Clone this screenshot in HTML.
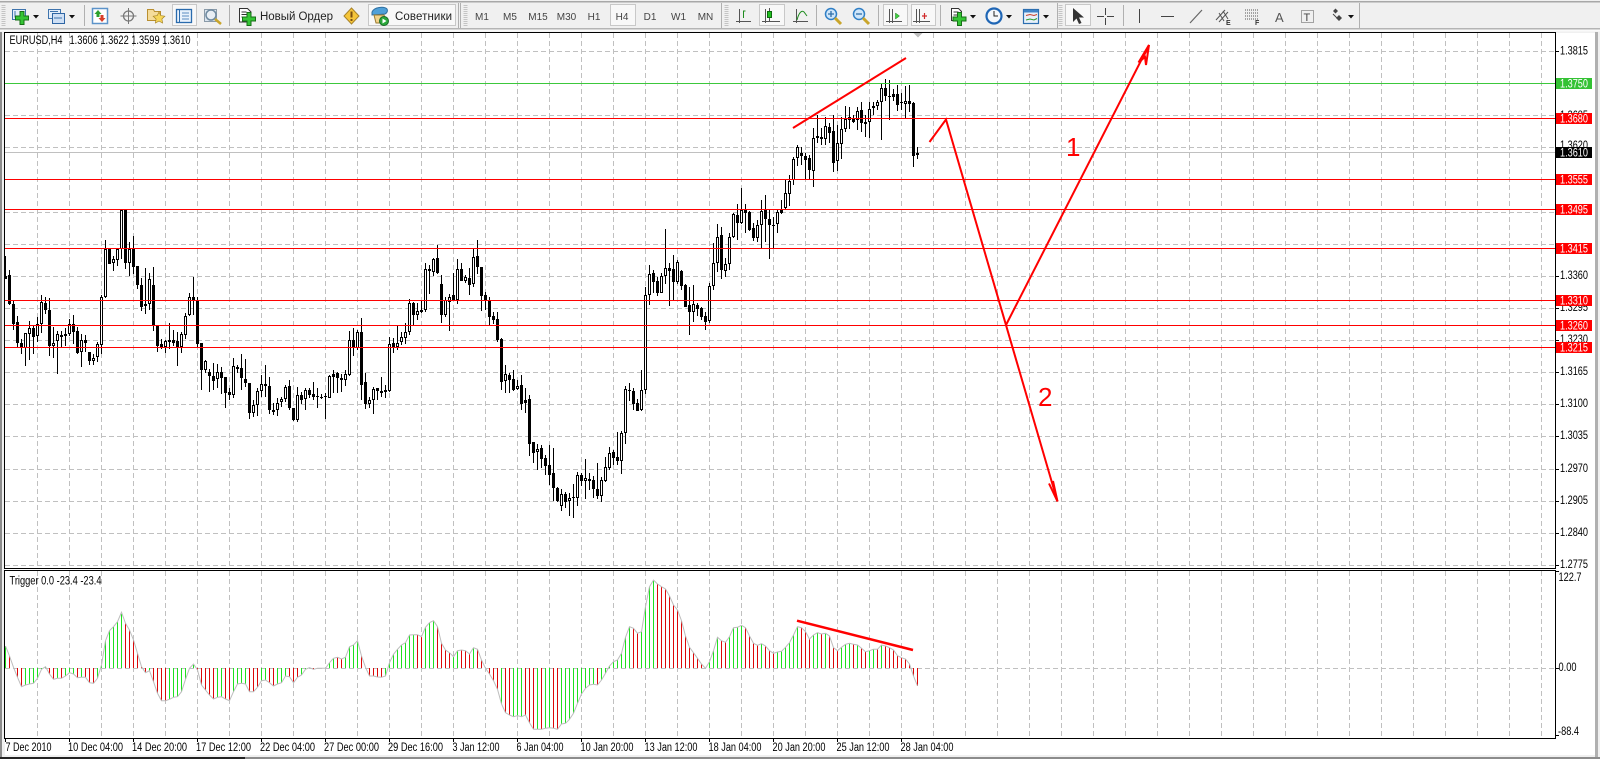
<!DOCTYPE html>
<html><head><meta charset="utf-8"><title>EURUSD,H4</title>
<style>
html,body{margin:0;padding:0;background:#f0f0f0;width:1600px;height:759px;overflow:hidden}
svg{display:block;position:absolute;left:0;top:0}
text{font-family:"Liberation Sans",sans-serif;font-size:11.5px;fill:#000}
.p{font-size:10px;fill:#444;text-anchor:middle}
.w{fill:#fff}
.t{font-size:11.5px;fill:#222}
</style></head><body>
<svg id="s" width="1600" height="759" viewBox="0 0 1600 759" xmlns="http://www.w3.org/2000/svg">
<defs>
<g id="plus"><path d="M-2-6.500h4v4.500h4.500v4h-4.500v4.500h-4v-4.500h-4.500v-4h4.500z" fill="#35c535" stroke="#167016"/></g>
<g id="mag"><circle cx="0" cy="0" r="5.500" fill="#cfe6fa" stroke="#2f7fc6" stroke-width="1.500"/><path d="M4 4l6 6" stroke="#c9a52b" stroke-width="3"/></g>
</defs>
<!-- window chrome -->
<rect x="0" y="0" width="1600" height="759" fill="#f0f0f0"/>
<rect x="0" y="1" width="1600" height="1.500" fill="#a8a8a8"/>
<rect x="0" y="28" width="1600" height="1.500" fill="#b4b4b4"/>
<rect x="0" y="29.500" width="1600" height="2" fill="#fafafa"/>
<rect x="0" y="32" width="2" height="725" fill="#8c8c8c"/>
<rect x="5" y="33" width="1590" height="722" fill="#fff"/>
<rect x="1595" y="32" width="3" height="725" fill="#b0b0b0"/>
<rect x="0" y="757" width="245" height="2" fill="#222"/>
<rect x="245" y="757" width="1355" height="2" fill="#8c8c8c"/>
<g id="grid"></g>
<rect x="5" y="152" width="1550" height="1" fill="#c0c0c0"/>
<g id="cnd" shape-rendering="crispEdges"></g>
<g shape-rendering="crispEdges" fill="#f00">
<rect x="5" y="83" width="1550" height="1" fill="#3cc83c"/>
<rect x="5" y="118" width="1550" height="1"/>
<rect x="5" y="179" width="1550" height="1"/>
<rect x="5" y="209" width="1550" height="1"/>
<rect x="5" y="248" width="1550" height="1"/>
<rect x="5" y="300" width="1550" height="1"/>
<rect x="5" y="325" width="1550" height="1"/>
<rect x="5" y="347" width="1550" height="1"/>
</g>
<g id="ind"></g>
<!-- frames -->
<g shape-rendering="crispEdges" fill="#000">
<rect x="4" y="32" width="1551" height="1"/>
<rect x="4" y="32" width="1" height="537"/>
<rect x="4" y="568" width="1551" height="1"/>
<rect x="1555" y="32" width="1" height="537"/>
<rect x="4" y="570" width="1551" height="1"/>
<rect x="4" y="570" width="1" height="169"/>
<rect x="4" y="738" width="1551" height="1"/>
<rect x="1555" y="570" width="1" height="169"/>
<rect x="1556" y="51" width="3" height="1"/><rect x="1556" y="276" width="3" height="1"/><rect x="1556" y="308" width="3" height="1"/><rect x="1556" y="340" width="3" height="1"/><rect x="1556" y="372" width="3" height="1"/><rect x="1556" y="404" width="3" height="1"/><rect x="1556" y="436" width="3" height="1"/><rect x="1556" y="469" width="3" height="1"/><rect x="1556" y="501" width="3" height="1"/><rect x="1556" y="533" width="3" height="1"/><rect x="1556" y="565" width="3" height="1"/>
<rect x="1556" y="668" width="3" height="1"/><rect x="1556" y="571" width="3" height="1"/><rect x="1556" y="735" width="3" height="1"/>
<rect x="5" y="739" width="1" height="3"/><rect x="69" y="739" width="1" height="3"/><rect x="133" y="739" width="1" height="3"/><rect x="197" y="739" width="1" height="3"/><rect x="261" y="739" width="1" height="3"/><rect x="325" y="739" width="1" height="3"/><rect x="389" y="739" width="1" height="3"/><rect x="453" y="739" width="1" height="3"/><rect x="517" y="739" width="1" height="3"/><rect x="581" y="739" width="1" height="3"/><rect x="645" y="739" width="1" height="3"/><rect x="709" y="739" width="1" height="3"/><rect x="773" y="739" width="1" height="3"/><rect x="837" y="739" width="1" height="3"/><rect x="901" y="739" width="1" height="3"/>
</g>
<path d="M913.500 33h9l-4.500 4.500z" fill="#bdbdbd"/>
<!-- annotations -->
<g fill="none" stroke="#f00" stroke-width="2">
<path d="M793 128L906 58"/>
<path d="M929.500 142L946 119.500L1057.500 501.500"/>
<path d="M1049 483.500L1057.500 501.500L1053 481"/>
<path d="M1006 325L1149 45"/>
<path d="M1138.500 62.500L1149 45L1146 65L1145 57L1138.500 62.500"/>
<path d="M1142 59L1148 49" stroke-width="1.500"/>
<path d="M797 620.700L913 650" stroke-width="2.500"/>
</g>
<text x="1066" y="156" style="font-size:26px;fill:#f00">1</text>
<text x="1038" y="406" style="font-size:26px;fill:#f00">2</text>
<!-- price labels -->
<g>
<text x="1560" y="54.500" textLength="28" lengthAdjust="spacingAndGlyphs">1.3815</text>
<text x="1560" y="119" textLength="28" lengthAdjust="spacingAndGlyphs">1.3685</text>
<text x="1560" y="149" textLength="28" lengthAdjust="spacingAndGlyphs">1.3620</text>
<text x="1560" y="279" textLength="28" lengthAdjust="spacingAndGlyphs">1.3360</text>
<text x="1560" y="311" textLength="28" lengthAdjust="spacingAndGlyphs">1.3295</text>
<text x="1560" y="343" textLength="28" lengthAdjust="spacingAndGlyphs">1.3230</text>
<text x="1560" y="375" textLength="28" lengthAdjust="spacingAndGlyphs">1.3165</text>
<text x="1560" y="407" textLength="28" lengthAdjust="spacingAndGlyphs">1.3100</text>
<text x="1560" y="439" textLength="28" lengthAdjust="spacingAndGlyphs">1.3035</text>
<text x="1560" y="472" textLength="28" lengthAdjust="spacingAndGlyphs">1.2970</text>
<text x="1560" y="504" textLength="28" lengthAdjust="spacingAndGlyphs">1.2905</text>
<text x="1560" y="536" textLength="28" lengthAdjust="spacingAndGlyphs">1.2840</text>
<text x="1560" y="568" textLength="28" lengthAdjust="spacingAndGlyphs">1.2775</text>
<g shape-rendering="crispEdges">
<rect x="1556" y="78" width="36" height="11" fill="#34c234"/>
<rect x="1556" y="113" width="36" height="11" fill="#f00"/>
<rect x="1556" y="147" width="36" height="11" fill="#000"/>
<rect x="1556" y="174" width="36" height="11" fill="#f00"/>
<rect x="1556" y="204" width="36" height="11" fill="#f00"/>
<rect x="1556" y="243" width="36" height="11" fill="#f00"/>
<rect x="1556" y="295" width="36" height="11" fill="#f00"/>
<rect x="1556" y="320" width="36" height="11" fill="#f00"/>
<rect x="1556" y="342" width="36" height="11" fill="#f00"/>
</g>
<text class="w" x="1560" y="87.500" textLength="28" lengthAdjust="spacingAndGlyphs">1.3750</text>
<text class="w" x="1560" y="122.500" textLength="28" lengthAdjust="spacingAndGlyphs">1.3680</text>
<text class="w" x="1560" y="156.500" textLength="28" lengthAdjust="spacingAndGlyphs">1.3610</text>
<text class="w" x="1560" y="183.500" textLength="28" lengthAdjust="spacingAndGlyphs">1.3555</text>
<text class="w" x="1560" y="213.500" textLength="28" lengthAdjust="spacingAndGlyphs">1.3495</text>
<text class="w" x="1560" y="252.500" textLength="28" lengthAdjust="spacingAndGlyphs">1.3415</text>
<text class="w" x="1560" y="304.500" textLength="28" lengthAdjust="spacingAndGlyphs">1.3310</text>
<text class="w" x="1560" y="329.500" textLength="28" lengthAdjust="spacingAndGlyphs">1.3260</text>
<text class="w" x="1560" y="351.500" textLength="28" lengthAdjust="spacingAndGlyphs">1.3215</text>
<text x="1558.500" y="581" textLength="23" lengthAdjust="spacingAndGlyphs">122.7</text>
<text x="1558.500" y="671" textLength="18" lengthAdjust="spacingAndGlyphs">0.00</text>
<text x="1558" y="735" textLength="21" lengthAdjust="spacingAndGlyphs">-88.4</text>
</g>
<!-- chart titles -->
<text x="9.500" y="44" textLength="53" lengthAdjust="spacingAndGlyphs">EURUSD,H4</text>
<text x="69.500" y="44" textLength="121" lengthAdjust="spacingAndGlyphs">1.3606 1.3622 1.3599 1.3610</text>
<text x="9.500" y="584.500" textLength="92" lengthAdjust="spacingAndGlyphs">Trigger 0.0 -23.4 -23.4</text>
<!-- time labels -->
<g>
<text x="5.500" y="751" textLength="46" lengthAdjust="spacingAndGlyphs">7 Dec 2010</text>
<text x="68" y="751" textLength="55" lengthAdjust="spacingAndGlyphs">10 Dec 04:00</text>
<text x="132" y="751" textLength="55" lengthAdjust="spacingAndGlyphs">14 Dec 20:00</text>
<text x="196" y="751" textLength="55" lengthAdjust="spacingAndGlyphs">17 Dec 12:00</text>
<text x="260" y="751" textLength="55" lengthAdjust="spacingAndGlyphs">22 Dec 04:00</text>
<text x="324" y="751" textLength="55" lengthAdjust="spacingAndGlyphs">27 Dec 00:00</text>
<text x="388" y="751" textLength="55" lengthAdjust="spacingAndGlyphs">29 Dec 16:00</text>
<text x="452.500" y="751" textLength="47" lengthAdjust="spacingAndGlyphs">3 Jan 12:00</text>
<text x="516.500" y="751" textLength="47" lengthAdjust="spacingAndGlyphs">6 Jan 04:00</text>
<text x="580.500" y="751" textLength="53" lengthAdjust="spacingAndGlyphs">10 Jan 20:00</text>
<text x="644.500" y="751" textLength="53" lengthAdjust="spacingAndGlyphs">13 Jan 12:00</text>
<text x="708.500" y="751" textLength="53" lengthAdjust="spacingAndGlyphs">18 Jan 04:00</text>
<text x="772.500" y="751" textLength="53" lengthAdjust="spacingAndGlyphs">20 Jan 20:00</text>
<text x="836.500" y="751" textLength="53" lengthAdjust="spacingAndGlyphs">25 Jan 12:00</text>
<text x="900.500" y="751" textLength="53" lengthAdjust="spacingAndGlyphs">28 Jan 04:00</text>
</g>
<!-- toolbar -->
<g shape-rendering="crispEdges" fill="#b0b0b0">
<rect x="84" y="5" width="1" height="21"/><rect x="229" y="5" width="1" height="21"/>
<rect x="458" y="3" width="1" height="25"/><rect x="460" y="3" width="1" height="25"/>
<rect x="721" y="3" width="1" height="25"/><rect x="816" y="5" width="1" height="21"/><rect x="878" y="5" width="1" height="21"/><rect x="940" y="5" width="1" height="21"/>
<rect x="1057" y="3" width="1" height="25"/><rect x="1123" y="5" width="1" height="21"/><rect x="1359" y="3" width="1" height="25"/>
</g>
<g fill="none" stroke="#c4c4c4" stroke-width="4" stroke-dasharray="1 1"><path d="M3.500 5v21M465.500 5v21M726.500 5v21M1060.500 5v21"/></g>
<g fill="#f8f8f8" stroke="#c8c8c8">
<rect x="172.500" y="4.500" width="24" height="21"/>
<rect x="368.500" y="4.500" width="87" height="21"/>
<rect x="610.500" y="4.500" width="25" height="21"/>
<rect x="759.500" y="4.500" width="25" height="21"/>
<rect x="883.500" y="4.500" width="24" height="21"/>
<rect x="911.500" y="4.500" width="24" height="21"/>
<rect x="1065.500" y="4.500" width="25" height="21"/>
</g>
<!-- new chart -->
<rect x="12.500" y="9.500" width="13" height="10" fill="#e4eefa" stroke="#3f74ad"/>
<path d="M15 11v6h8" stroke="#3f74ad" fill="none"/>
<use href="#plus" x="22" y="18"/>
<path d="M33 15h6l-3 3.500zM69 15h6l-3 3.500z" fill="#111"/>
<!-- profiles -->
<rect x="48.500" y="9.500" width="12" height="9" fill="#e4eefa" stroke="#3f74ad"/>
<rect x="52.500" y="13.500" width="12" height="10" fill="#cfe0f5" stroke="#2f66a4"/>
<path d="M50 11.500h8M54 18h8" stroke="#3f74ad"/>
<!-- market watch -->
<rect x="92.500" y="8.500" width="15" height="15" fill="#fff" stroke="#5c93c9" stroke-width="1.500"/>
<path d="M98 10l-3.500 4h2v3h3v-3h2z" fill="#2ca02c"/>
<path d="M102 22l3.500-4h-2v-3h-3v3h-2z" fill="#d8402a"/>
<!-- navigator cross -->
<circle cx="128.500" cy="16" r="5" fill="none" stroke="#777" stroke-width="1.300"/>
<path d="M128.500 8v16M120.500 16h16" stroke="#777"/>
<!-- folder star -->
<path d="M147.500 9.500h6l1 2h6v9h-13z" fill="#f5dc9a" stroke="#b98f30"/>
<path d="M159 12l1.800 3.600 4 .6-2.900 2.800.7 4-3.600-1.900-3.600 1.900.7-4-2.900-2.800 4-.6z" fill="#f6d65a" stroke="#a78420" stroke-width=".7"/>
<!-- terminal -->
<rect x="176.500" y="9.500" width="15" height="13" fill="#e9f2fc" stroke="#2a6bad" stroke-width="1.300"/>
<path d="M179.500 10v12" stroke="#2a6bad"/><path d="M182 13h7M182 16h7M182 19h7" stroke="#5a8cc0"/>
<!-- tester -->
<rect x="204.500" y="9.500" width="12" height="12" fill="#dde6ef" stroke="#8a9aa8"/>
<circle cx="211" cy="15" r="5" fill="#e8eef4" stroke="#6f8aa0" stroke-width="1.500"/>
<path d="M215 19l6 5" stroke="#c9a52b" stroke-width="2.500"/>
<!-- new order -->
<path d="M239.500 8.500h8l3.500 3.500v10h-11.500z" fill="#fff" stroke="#333"/>
<path d="M241.500 12h5M241.500 14.500h7M241.500 17h6" stroke="#333"/>
<use href="#plus" x="249" y="19"/>
<text class="t" x="260" y="20" textLength="73" lengthAdjust="spacing">Новый Ордер</text>
<!-- alert -->
<path d="M351.500 8l7.500 8-7.500 8-7.500-8z" fill="#f5c53a" stroke="#a8832a"/>
<rect x="350.500" y="11.500" width="2" height="6" fill="#7a4f10"/><rect x="350.500" y="19" width="2" height="2" fill="#7a4f10"/>
<!-- expert -->
<path d="M372 12c2-5 12-6 15-3 1 2 0 4-2 5l-13 1z" fill="#4fa0d8" stroke="#2f6fa0"/>
<path d="M374 15h10l3 8h-11z" fill="#f2d38a" stroke="#9a7a30"/>
<circle cx="384" cy="21" r="4.500" fill="#2aa83a" stroke="#1a6a28"/><path d="M382.500 18.500l4 2.500-4 2.500z" fill="#fff"/>
<text class="t" x="395" y="20" textLength="57" lengthAdjust="spacing">Советники</text>
<!-- periods -->
<text class="p" x="482" y="20">M1</text>
<text class="p" x="510" y="20">M5</text>
<text class="p" x="538" y="20">M15</text>
<text class="p" x="566.500" y="20">M30</text>
<text class="p" x="594" y="20">H1</text>
<text class="p" x="622" y="20">H4</text>
<text class="p" x="650" y="20">D1</text>
<text class="p" x="678.500" y="20">W1</text>
<text class="p" x="705.500" y="20">MN</text>
<!-- chart type -->
<g fill="none" stroke="#555">
<path d="M739.500 9v14M736 21.500h15"/><path d="M743.500 18v-7h2" stroke="#1e8c1e"/>
<path d="M765.500 9v14M762 21.500h18M769.500 8v3M769.500 18v3"/>
<path d="M796.500 9v14M793 21.500h15"/><path d="M797 20c2-8 5-10 7-8l3 4" stroke="#1e8c1e"/>
</g>
<rect x="767.500" y="11.500" width="4" height="6" fill="#1fbf1f" stroke="#0e6a0e"/>
<!-- zoom -->
<use href="#mag" x="831" y="14"/>
<path d="M828 14h6M831 11v6" stroke="#2f6fa8" stroke-width="1.300"/>
<use href="#mag" x="859" y="14"/>
<path d="M856 14h6" stroke="#2f6fa8" stroke-width="1.300"/>
<!-- autoscroll, shift -->
<g fill="none" stroke="#555"><path d="M889.500 9v14M886 21.500h16M892.500 9v14"/><path d="M916.500 9v14M913 21.500h17M919.500 9v14"/></g>
<path d="M895.500 13l4 3-4 3z" fill="#3fcf3f" stroke="#1a7a1a" stroke-width=".5"/>
<path d="M924.500 13v6M922 16h5" stroke="#d02a2a" stroke-width="1.200"/>
<!-- indicators -->
<path d="M951.500 8.500h7l3 3v9h-10z" fill="#fff" stroke="#333"/>
<path d="M953.500 12h5M953.500 15h5" stroke="#333"/>
<use href="#plus" x="959.500" y="19"/>
<path d="M970 15h6l-3 3.500zM1006 15h6l-3 3.500zM1043 15h6l-3 3.500z" fill="#111"/>
<!-- clock -->
<circle cx="994" cy="16" r="7.500" fill="#f4f7fb" stroke="#1f66b5" stroke-width="2.200"/>
<path d="M994 11v5h4" stroke="#222" fill="none"/>
<!-- templates -->
<rect x="1023.500" y="9.500" width="15" height="14" fill="#e8f0fa" stroke="#2c6fb0" stroke-width="1.200"/>
<rect x="1024" y="10" width="14" height="2.500" fill="#3f84c8"/>
<path d="M1026 15.500l4-1 4 1 3-1" stroke="#c8402a" fill="none"/><path d="M1026 20l4-1 4 1 3-1.500" stroke="#2c9c2c" fill="none"/>
<!-- tools -->
<path d="M1073 8v14l3.500-3.500 2.500 5.500 2.500-1-2.500-5.500 5 0z" fill="#333"/>
<path d="M1105.500 8v7M1105.500 18v7M1097 16.500h7M1107 16.500h7" stroke="#444"/>
<path d="M1139.500 9v14" stroke="#444"/>
<path d="M1161 16.500h13" stroke="#444"/>
<path d="M1190 23l12-13" stroke="#666" stroke-width="1.200"/>
<path d="M1216 20l9-10M1219 22l9-10M1219 13l5 8M1223 11l5 8" stroke="#555" fill="none"/>
<text x="1226" y="25" style="font-size:7px;font-weight:bold;fill:#333">E</text>
<path d="M1245 10h13M1245 13h13M1245 16h13M1245 19h13" stroke="#555" stroke-dasharray="1 1"/>
<text x="1255" y="25" style="font-size:7px;font-weight:bold;fill:#333">F</text>
<text x="1275" y="22" style="font-size:13px;fill:#555">A</text>
<rect x="1301.500" y="10.500" width="12" height="12" fill="none" stroke="#555" stroke-dasharray="1 1"/>
<text x="1303.500" y="21" style="font-size:11px;fill:#444">T</text>
<path d="M1333 11l2.500-2.500 2.500 2.500-2.500 2.500zM1336 18l3-3 3 3-3 3z" fill="#444"/><path d="M1333 14l5 5" stroke="#444"/>
<path d="M1348 15h6l-3 3.500z" fill="#111"/>
</svg>
<script>
(function(){
var NS='http://www.w3.org/2000/svg';
function el(n,a,p){var e=document.createElementNS(NS,n);for(var k in a)e.setAttribute(k,a[k]);p.appendChild(e);return e;}
var g=document.getElementById('grid'),c=document.getElementById('cnd'),ind=document.getElementById('ind');
var d='';
[51,83,115,147,179,212,244,276,308,340,372,404,436,469,501,533,565].forEach(function(y){d+='M5 '+(y+.5)+'H1555';});
d+='M5 668.500H1555';
for(var x=37;x<1555;x+=32){d+='M'+(x+.5)+' 33V568M'+(x+.5)+' 571V738';}
el('path',{d:d,fill:'none',stroke:'#c0c0c0','stroke-width':1,'stroke-dasharray':'5 3','shape-rendering':'crispEdges'},g);

/* hi, bodyTop, bodyBottom, lo, white(1)/black(0), zoom coordinates */
var A=[[168,228,238,238,0],[210,226,314,315,0],[300,312,372,390,0],[348,366,428,440,0],[418,430,445,462,0],[398,400,445,497,1],[362,385,402,480,1],[378,385,413,462,0],[350,373,410,425,1],[286,306,373,400,1],[290,310,330,340,0],[295,330,438,470,0],[382,428,438,474,1],[392,403,425,522,1],[392,406,413,440,0],[385,403,410,438,1],[358,373,403,408,1],[346,373,396,432,0],[380,393,458,462,0],[402,421,458,500,1],[405,420,428,456,0],[455,456,482,494,0],[462,473,482,494,1],[425,433,473,484,1],[284,290,433,462,1],[120,146,290,294,1],[146,146,190,192,0],[168,178,190,212,1],[145,146,178,198,1],[29,29,146,175,1],[29,29,188,207,0],[125,146,188,228,1],[108,146,200,222,0],[198,198,254,268,0],[235,255,320,333,0],[205,312,318,343,0],[218,238,314,330,1],[200,255,376,392,0],[375,375,438,455,0],[418,433,442,447,0],[420,424,442,458,1],[368,421,426,445,0],[390,421,430,438,0],[395,423,442,497,0],[395,403,442,458,1],[340,349,407,418,1],[280,292,345,350,1],[232,292,304,345,0],[292,300,432,442,0],[428,430,512,570,0],[480,484,510,518,1],[508,517,530,578,0],[490,528,542,570,0],[492,517,539,565,1],[500,517,536,580,0],[530,532,580,622,0],[565,577,585,600,0],[474,498,586,595,1],[495,502,509,520,0],[462,505,536,570,0],[478,538,550,562,0],[548,550,640,655,0],[600,616,640,652,1],[565,574,616,648,1]];
var B=[[525,553,575,590,1],[495,553,560,590,0],[530,558,630,640,0],[610,630,637,645,1],[595,610,632,648,1],[590,598,608,620,1],[555,562,597,605,1],[540,558,624,630,0],[625,625,660,664,0],[560,586,660,664,1],[575,586,602,612,0],[565,571,598,632,1],[565,570,585,595,0],[545,583,593,600,0],[565,589,593,625,0],[582,591,592,598,0],[578,589,592,655,0],[525,528,593,595,1],[510,522,530,578,1],[515,519,533,578,0],[522,534,539,575,0],[510,523,540,558,1],[393,421,525,528,1],[385,420,445,470,0],[390,396,443,450,1],[355,396,555,600,0],[520,547,612,628,0],[590,600,612,622,1],[560,568,602,642,1],[565,565,575,600,0],[532,573,578,592,0],[555,571,578,595,1],[410,431,572,575,1],[415,430,441,460,0],[378,428,440,450,1],[395,412,426,435,1],[370,397,416,434,1],[297,310,398,405,1],[305,310,345,375,0],[310,332,345,360,1],[300,331,336,338,0],[190,208,332,336,1],[195,208,215,282,0],[175,178,218,230,1],[135,175,220,222,0],[225,252,345,370,0],[290,300,345,350,1],[282,290,305,392,1],[220,285,300,305,0],[178,208,300,312,1],[190,208,243,245,0],[225,232,243,248,1],[205,235,255,285,0],[148,170,250,262,1],[120,168,200,222,0],[200,202,288,332,0],[275,286,302,330,0],[290,302,350,375,0],[335,348,360,372,0],[335,358,420,425,0],[415,417,545,570,0],[495,523,545,578,1],[518,526,542,578,0]];
var C=[[450,478,510,512,0],[480,498,508,510,1],[465,496,552,570,0],[505,540,548,580,1],[525,537,672,708,0],[668,667,700,728,0],[672,687,697,750,1],[675,685,718,745,0],[705,714,738,765,0],[675,736,765,795,0],[685,760,806,845,0],[800,805,843,845,0],[808,823,860,875,1],[815,822,845,862,0],[820,835,845,890,1],[792,832,834,893,0],[755,766,836,858,1],[760,765,782,800,0],[716,775,785,836,1],[760,778,785,812,0],[768,781,808,835,0],[728,808,830,835,0],[770,781,830,845,1],[712,742,785,788,1],[680,698,742,750,1],[690,697,716,735,0],[635,712,725,735,0],[632,640,725,760,1],[498,508,640,672,1],[490,510,513,545,0],[505,513,552,570,0],[538,549,572,575,0],[450,511,570,574,1],[200,226,512,520,1],[135,163,226,255,1],[150,160,188,220,0],[170,183,218,228,0],[160,168,218,220,1],[28,145,170,192,1],[130,144,152,260,0],[105,148,188,240,0],[120,127,188,192,1],[150,153,197,210,0],[193,195,260,262,0],[200,255,276,345,0],[195,253,277,305,1],[250,255,266,290,0],[262,265,293,300,0],[275,288,305,330,0],[190,199,305,310,1],[68,130,199,208,1],[12,50,128,155,1],[20,46,150,176,0],[115,132,152,172,1],[40,52,132,150,1]];
var D=[[458,462,530,532,1],[432,465,490,540,0],[385,450,490,492,1],[432,450,458,520,0],[452,456,510,512,0],[490,505,534,545,0],[480,496,534,546,1],[420,454,496,565,1],[405,450,476,546,0],[450,477,494,598,0],[470,495,497,562,0],[450,457,493,518,1],[420,450,458,462,1],[360,400,446,450,1],[345,363,403,438,1],[290,298,360,375,1],[255,262,296,318,1],[260,278,288,315,0],[278,288,300,358,0],[285,295,332,358,0],[205,235,335,383,1],[165,229,236,250,1],[205,231,236,255,0],[170,198,236,255,1],[190,201,218,250,0],[165,213,308,335,0],[195,250,305,332,1],[170,208,254,296,1],[138,178,208,215,1],[140,170,178,205,0],[165,173,186,188,0],[142,154,182,210,1],[125,150,190,215,0],[165,186,193,230,1],[125,148,188,234,1],[125,139,146,165,1],[120,127,140,150,1],[70,85,127,240,1],[58,85,110,125,0],[60,108,109,180,0],[88,102,110,125,1],[75,102,134,152,0],[100,127,131,152,0],[78,122,132,178,1],[75,122,130,155,0],[125,130,288,320,0],[260,278,284,296,1]];

var i=0;
function rect(x,y,w,h,f){ if(h<1)h=1; el('rect',{x:x,y:Math.round(y),width:w,height:Math.round(h),fill:f},c); }
function add(list,base){
  list.forEach(function(r){
    var cx=Math.floor(5.33+4*i);i++;
    var hi=base+r[0]/3,t=base+r[1]/3,b=base+r[2]/3,lo=base+r[3]/3;
    rect(cx,hi,1,lo-hi,'#000');
    rect(cx-1,t,3,Math.max(b-t,1),'#000');
    if(r[4]&&b-t>=3){rect(cx,t+1,1,b-t-2,'#fff');}
  });
}
add(A,200);add(B,200);add(C,220);add(D,60);

/* indicator: value y in zoom coords, G/R */
var I1='G288 R318 R352 R382 R410 G405 G402 G400 G385 G358 G350 R372 R388 G385 R385 G378 G368 G372 R383 G382 R382 R398 R400 G385 G345 G272 G242 G230 G215 G187 R220 R240 R270 R310 R350 R368 G362 R395 R430 R452 R452 G448 G442 G440 G425 G388 G355 G342 R360 R405 R420 R435 R447 G442 G440 R447 R452 G425 G402 G400 G402 R425 R425 R412 G392 G390 R398 R408 G402 G398 G378 R380 R398 R382'.split(' ');
var I2='G345 G328 G323 R328 G325 G325 G325 G308 G295 R292 R297 G292 G260 G255 G242 R288 R322 R348 R348 R351 R352 G348 G308 G283 G268 G255 G248 G225 G224 R224 R230 G202 G188 G182 R200 R250 R270 R278 G290 G272 R270 R272 R282 G263 R268 R300 R325 R342 R362 R388 G432 R458 R465 G470 G467 G470 R465 R488 R508 G508 R508 G505 G503 R505 R508 G492 G490 G478 G460 G430 G402 G385 G375 G373 R375 G360 G340 G318 G305 G300'.split(' ');
var I3='G280 G232 G200 R205 R220 G215 G140 G80 G60 R72 R80 R87 R108 R135 R150 R182 R228 R262 R278 R295 R312 R325 G305 G272 G232 R242 R247 G230 G203 G202 G196 R203 R228 R250 R256 G251 R258 R272 R280 G276 G274 G262 G248 G225 G200 R203 R215 R237 G225 G218 R222 G220 R228 R263 R272 G262 G253 G250 R253 G255 R265 R275 G272 G268 R268 G255 R258 R263 R270 R287 R293 R297 R312 R348 R378'.split(' ');
var pts=[],j=0;
function addI(list,base){
  list.forEach(function(s){
    var cx=Math.floor(5.33+4*j);j++;
    var y=base+parseInt(s.slice(1),10)/3;
    var col=s[0]=='G'?'#1fe01f':'#dc0808';
    var t=Math.min(y,668),b=Math.max(y,668);
    if(b-t>=1) el('rect',{x:cx,y:Math.round(t),width:1,height:Math.round(b-t)||1,fill:col,'shape-rendering':'crispEdges'},ind);
    pts.push((cx+.5)+','+y.toFixed(1));
  });
}
addI(I1,550);addI(I2,560);addI(I3,560);
el('polyline',{points:pts.join(' '),fill:'none',stroke:'#bdbdbd','stroke-width':1},ind);
})();
</script>
</body></html>
